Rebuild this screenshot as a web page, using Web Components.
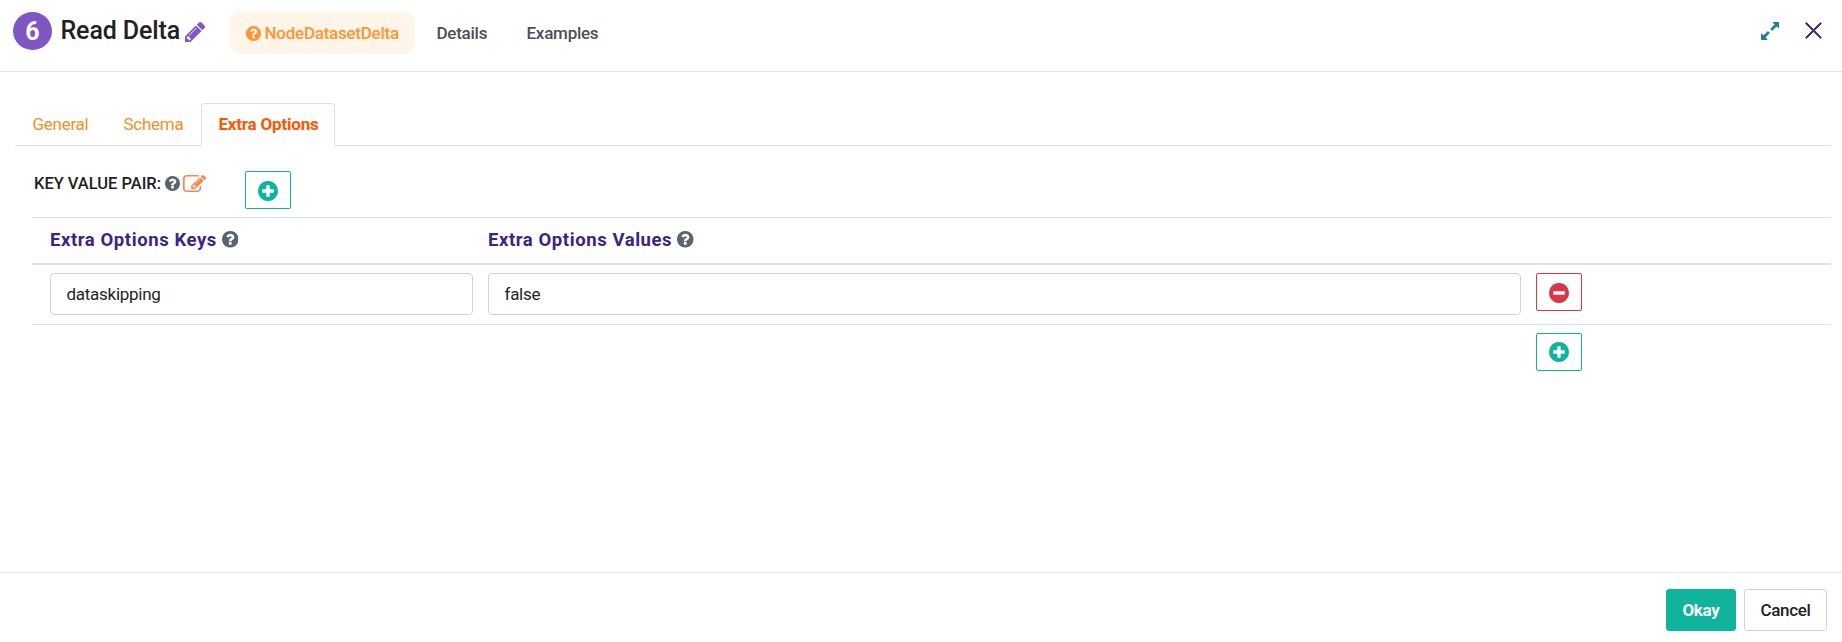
<!DOCTYPE html>
<html lang="en"><head><meta charset="utf-8"><title>Read Delta</title>
<style>
html,body{margin:0;height:100%;background:#fff;overflow:hidden}
body{font-family:Roboto,"Liberation Sans",sans-serif;font-size:17px;color:#212529}
</style></head><body>
<node-dialog></node-dialog>
<script>
const RING = 'm320-64q0 209-103 385.5t-279.5 279.5-385.5 103-385.5-103-279.5-279.5-103-385.5 103-385.5 279.5-279.5 385.5-103 385.5 103 279.5 279.5 103 385.5z';
const ICONS = {
  question: ['128 128 1536 1536','M1024 1376v-192q0-14-9-23t-23-9h-192q-14 0-23 9t-9 23v192q0 14 9 23t23 9h192q14 0 23-9t9-23zm256-672q0-88-55.5-163t-138.5-116-170-41q-243 0-371 213-15 24 8 42l132 100q7 6 19 6 16 0 25-12 53-68 86-92 34-24 86-24 48 0 85.5 26t37.5 59q0 38-20 61t-68 45q-63 28-115.5 86.5t-52.5 125.5v36q0 14 9 23t23 9h192q14 0 23-9t9-23q0-19 21.5-49.5t54.5-49.5q32-18 49-28.5t46-35 44.5-48 28-60.5 12.5-81zm384 192q0 209-103 385.5t-279.5 279.5-385.5 103-385.5-103-279.5-279.5-103-385.5 103-385.5 279.5-279.5 385.5-103 385.5 103 279.5 279.5 103 385.5z'],
  plus: ['128 128 1536 1536','M1344 960v-128q0-26-19-45t-45-19h-256v-256q0-26-19-45t-45-19h-128q-26 0-45 19t-19 45v256h-256q-26 0-45 19t-19 45v128q0 26 19 45t45 19h256v256q0 26 19 45t45 19h128q26 0 45-19t19-45v-256h256q26 0 45-19t19-45z'+RING],
  minus: ['128 128 1536 1536','M1344 960v-128q0-26-19-45t-45-19h-768q-26 0-45 19t-19 45v128q0 26 19 45t45 19h768q26 0 45-19t19-45z'+RING],
  pencil: ['128 149 1515 1515','M491 1536l91-91-235-235-91 91v107h128v128h107zm523-928q0-22-22-22-10 0-17 7l-542 542q-7 7-7 17 0 22 22 22 10 0 17-7l542-542q7-7 7-17zm-54-192l416 416-832 832h-416v-416zm683 96q0 53-37 90l-166 166-416-416 166-165q36-38 90-38 53 0 91 38l235 234q37 39 37 91z'],
  edit: ['0 128 1784 1408','M888 1184l116-116-152-152-116 116v56h96v96h56zm440-720q-16-16-33 1l-350 350q-17 17-1 33t33-1l350-350q17-17 1-33zm80 594v190q0 119-84.5 203.5t-203.5 84.5h-832q-119 0-203.5-84.5t-84.5-203.5v-832q0-119 84.5-203.5t203.5-84.5h832q63 0 117 25 15 7 18 23 3 17-9 29l-49 49q-14 14-32 8-23-6-45-6h-832q-66 0-113 47t-47 113v832q0 66 47 113t113 47h832q66 0 113-47t47-113v-126q0-13 9-22l64-64q15-15 35-7t20 29zm-96-738l288 288-672 672h-288v-288zm444 132l-92 92-288-288 92-92q28-28 68-28t68 28l152 152q28 28 28 68t-28 68z'],
  expand: ['0 0 18 18','M11.300 0H18v6.500L15.700 4.600 11 9 9.200 7.100 13.600 2.500ZM7 9 8.900 10.900 4.700 15.300 6.700 18H0V11.300L2.600 13.300Z'],
  close: ['0 0 17 17','M.6 1.500 1.500.6 8.500 7.500 15.500.6 16.400 1.500 9.500 8.500 16.400 15.500 15.500 16.400 8.500 9.500 1.500 16.400.6 15.500 7.500 8.500Z']
};
function define(name, html, setup){
  customElements.define(name, class extends HTMLElement{
    constructor(){
      super();
      const t=document.createElement('template');
      t.innerHTML='<style>*{box-sizing:border-box}:host{box-sizing:border-box}</style>'+html;
      this.attachShadow({mode:'open'}).append(t.content.cloneNode(true));
    }
    connectedCallback(){ if(setup) setup(this, this.shadowRoot); }
  });
}
define('fa-icon',`<style>:host{display:block;flex:none;width:15px;height:15px}svg{display:block;width:100%;height:100%}</style><svg preserveAspectRatio="none" fill="currentColor"><path/></svg>`,
 (el,r)=>{const [vb,d]=ICONS[el.getAttribute('name')];r.querySelector('svg').setAttribute('viewBox',vb);const p=r.querySelector('path');p.setAttribute('d',d);if(el.getAttribute('name')==='close'){p.setAttribute('stroke','currentColor');p.setAttribute('stroke-width','.9');}});

define('help-tab',`<style>:host{display:flex;align-items:center;gap:4px;height:42px;padding:0 15.500px;border-radius:10px;font-weight:500;font-size:17px;line-height:20px;letter-spacing:-.25px;color:#495057;white-space:nowrap}
:host([active]){background:#fff5e8;color:#ff9430;width:185px}</style><slot></slot>`);

define('dialog-header',`<style>:host{display:flex;height:72px;flex:none;border-bottom:1px solid #e5e5e5;padding:12px 20px 0 13px;align-items:flex-start}
.badge{width:39px;height:38px;border-radius:50%;background:#7e57c2;color:#fff;font-weight:700;font-size:25px;line-height:40px;text-align:center}
h1{margin:0 0 0 8.500px;font-size:25px;line-height:38px;font-weight:500;width:122.500px;letter-spacing:-.12px;white-space:nowrap;color:#212121}
.pencil{width:20px;height:20px;margin:10px 25px 0 2px;color:#7e57c2}
.details{margin-left:6px;width:83px}.examples{margin-left:7px}
.tools{margin-left:auto;display:flex;gap:26px;padding-top:10px}
.expand{width:18px;height:18px;color:#2a7a9b}.close{width:17px;height:17px;color:#3f2b8c}</style>
<div class="badge">6</div><h1>Read Delta</h1><fa-icon class="pencil" name="pencil"></fa-icon>
<help-tab active><fa-icon name="question"></fa-icon><span>NodeDatasetDelta</span></help-tab><help-tab class="details">Details</help-tab><help-tab class="examples">Examples</help-tab>
<div class="tools"><fa-icon class="expand" name="expand"></fa-icon><fa-icon class="close" name="close"></fa-icon></div>`);

define('nav-tab',`<style>:host{display:block;height:43px;padding:10px 16.500px 0;border:1px solid transparent;border-bottom:0;font-size:17px;line-height:20px;letter-spacing:-.28px;color:#f0901e;white-space:nowrap;flex:none}
:host([active]){color:#ff5500;font-weight:700;letter-spacing:-.2px;background:#fff;border-color:#dee2e6;border-radius:4px 4px 0 0}</style><slot></slot>`);
define('tab-bar',`<style>:host{display:flex;height:43px;margin:31px 11px 0 15px;background:linear-gradient(#dee2e6,#dee2e6) bottom/100% 1px no-repeat}
.g{width:91px}.s{width:95px}.e{width:134px}</style><nav-tab class="g">General</nav-tab><nav-tab class="s">Schema</nav-tab><nav-tab class="e" active>Extra Options</nav-tab>`);

define('icon-button',`<style>:host{display:flex;width:46px;height:38px;border:1px solid #10b39b;border-radius:2px;color:#10b39b;align-items:center;justify-content:center;flex:none}
:host([danger]){border-color:#dc3545;color:#dc3545}:host([low]){padding-top:1px}</style><slot></slot>`);

define('text-field',`<style>:host{display:block;height:42px;border:1px solid #ced4da;border-radius:4px;padding:0 15.500px;font-size:17px;line-height:41px;letter-spacing:-.27px;color:#212529}</style><slot></slot>`);

define('pair-title',`<style>:host{display:flex;height:71px;padding:25px 0 0 34px;color:#212121}
.label{font-weight:500;font-size:16.500px;line-height:26px;letter-spacing:-.02px;width:131px;white-space:nowrap}
.q{margin-top:4.500px;color:#5a6470}.edit{width:23px;height:17px;margin:4px 39px 0 3px;color:#ff8345}
.p{width:20px;height:20px}</style><div class="label">KEY VALUE PAIR:</div><fa-icon class="q" name="question"></fa-icon><fa-icon class="edit" name="edit"></fa-icon><icon-button low><fa-icon class="p" name="plus"></fa-icon></icon-button>`);

define('option-table',`<style>:host{display:block;margin:0 11px 0 32px;border-top:1px solid #dee2e6}
.row{display:grid;grid-template-columns:423px 1033px 46px;column-gap:15px;padding-left:18px;align-items:start}
.head{height:47px;border-bottom:2px solid #dee2e6;align-items:center;padding-bottom:2px}
.th{display:flex;align-items:center;font-weight:700;font-size:18.500px;line-height:22px;letter-spacing:.58px;color:#3c2486;white-space:nowrap}
.th fa-icon{width:16.500px;height:16.500px;color:#5a6470;margin-left:5px}
.body{height:60px;border-bottom:1px solid #dee2e6;padding-top:8px}
.foot{padding-top:8px}.foot icon-button{grid-column:3}.p{width:20px;height:20px}</style>
<div class="row head"><div class="th"><span>Extra Options Keys</span><fa-icon name="question"></fa-icon></div><div class="th"><span>Extra Options Values</span><fa-icon name="question"></fa-icon></div></div>
<div class="row body"><text-field>dataskipping</text-field><text-field>false</text-field><icon-button danger low><fa-icon class="p" name="minus"></fa-icon></icon-button></div>
<div class="row foot"><icon-button><fa-icon class="p" name="plus"></fa-icon></icon-button></div>`);

define('push-button',`<style>:host{display:block;width:83px;height:42px;border:1px solid #ced4da;border-radius:3px;text-align:center;font-weight:500;font-size:17px;line-height:41px;letter-spacing:-.3px;color:#212121}
:host([primary]){width:70px;background:#10b39b;border-color:#10b39b;color:#fff;font-weight:700}</style><slot></slot>`);
define('dialog-footer',`<style>:host{display:flex;height:70px;flex:none;margin-top:auto;border-top:1px solid #e5e5e5;padding:16px 15px 0;justify-content:flex-end;gap:8px}</style><push-button primary>Okay</push-button><push-button>Cancel</push-button>`);
define('node-dialog',`<style>:host{display:flex;flex-direction:column;height:642px}</style><dialog-header></dialog-header><tab-bar></tab-bar><pair-title></pair-title><option-table></option-table><dialog-footer></dialog-footer>`);
</script></body></html>
